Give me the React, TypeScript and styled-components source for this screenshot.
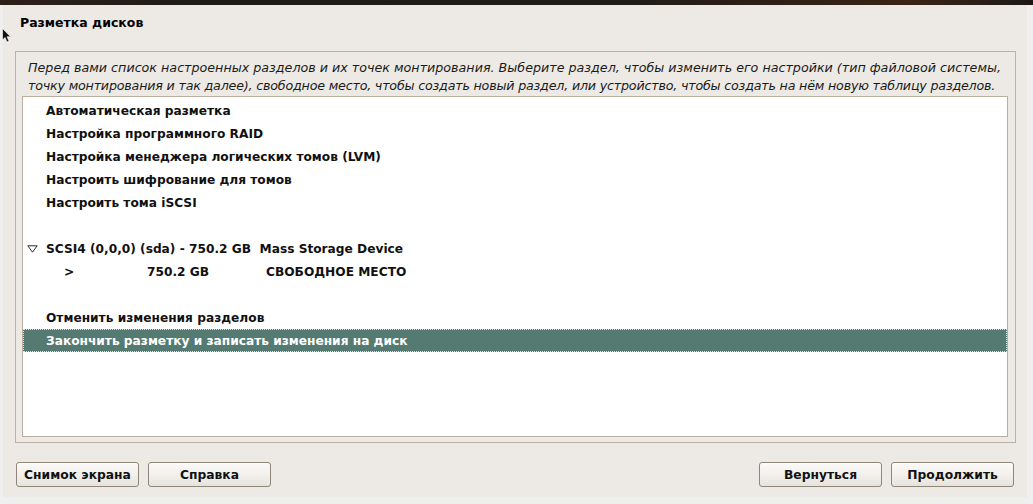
import styled, { createGlobalStyle } from "styled-components";

const GlobalStyle = createGlobalStyle`
  html, body {
    margin: 0;
    padding: 0;
    background: #efefef;
  }
  body {
    font-family: "DejaVu Sans", "Liberation Sans", sans-serif;
    font-size: 12px;
    color: #000;
  }
`;

const items = [
  { label: "Автоматическая разметка" },
  { label: "Настройка программного RAID" },
  { label: "Настройка менеджера логических томов (LVM)" },
  { label: "Настроить шифрование для томов" },
  { label: "Настроить тома iSCSI" },
];

const App = () => {
  return (
    <>
      <GlobalStyle />
      <Screen>
        <DesktopStrip />
        <Middle>
          <Gutter />
          <Window>
            <Title>Разметка дисков</Title>
            <Frame>
              <Description>
                <DescLine>
                  Перед вами список настроенных разделов и их точек монтирования. Выберите раздел, чтобы изменить его настройки (тип файловой системы,
                </DescLine>
                <DescLine $tight>
                  точку монтирования и так далее), свободное место, чтобы создать новый раздел, или устройство, чтобы создать на нём новую таблицу разделов.
                </DescLine>
              </Description>
              <ListBox>
                {items.map((item, idx) => (
                  <Row key={idx}>
                    <Cell $w={23} />
                    <span>{item.label}</span>
                  </Row>
                ))}
                <Row />
                <Row>
                  <Expander>
                    <svg width="11" height="8" viewBox="0 0 11 8">
                      <path d="M0.8 0.8 L10.2 0.8 L5.5 7.2 Z" fill="none" stroke="#2b2b2b" strokeWidth="1" />
                    </svg>
                  </Expander>
                  <span>SCSI4 (0,0,0) (sda) - 750.2 GB&nbsp; Mass Storage Device</span>
                </Row>
                <Row>
                  <Cell $w={41} />
                  <Cell $w={83}>&gt;</Cell>
                  <Cell $w={119}>750.2 GB</Cell>
                  <span>СВОБОДНОЕ МЕСТО</span>
                </Row>
                <Row />
                <Row>
                  <Cell $w={23} />
                  <span>Отменить изменения разделов</span>
                </Row>
                <Row $selected>
                  <Cell $w={23} />
                  <span>Закончить разметку и записать изменения на диск</span>
                </Row>
              </ListBox>
            </Frame>
            <ButtonBar>
              <ButtonGroup>
                <Button>Снимок экрана</Button>
                <Button>Справка</Button>
              </ButtonGroup>
              <ButtonGroup>
                <Button>Вернуться</Button>
                <Button>Продолжить</Button>
              </ButtonGroup>
            </ButtonBar>
          </Window>
          <RightGutter />
        </Middle>
        <Cursor width="10" height="16" viewBox="0 0 10 16">
          <path d="M0.5 0.5 L0.5 12 L3 9.5 L5 14 L7 13 L5 8.8 L8.5 8.8 Z" fill="#111" stroke="#fff" strokeWidth="0.6" />
        </Cursor>
      </Screen>
    </>
  );
};

export default App;

const Screen = styled.div`
  position: relative;
  width: 1033px;
  height: 504px;
  display: flex;
  flex-direction: column;
  overflow: hidden;
  background: #efefef;
`;

const Cursor = styled.svg`
  position: absolute;
  left: 2px;
  top: 28px;
`;

const DesktopStrip = styled.div`
  height: 5px;
  flex-shrink: 0;
  background: linear-gradient(
    90deg,
    #2c2119 0%,
    #1f1a17 20%,
    #201b18 60%,
    #3a2414 88%,
    #2a1f18 95%,
    #1c1816 100%
  );
`;

const Middle = styled.div`
  display: flex;
  height: 492px;
`;

const Gutter = styled.div`
  width: 3px;
  background: #efefef;
`;

const RightGutter = styled.div`
  width: 6px;
  background: #efefef;
`;

const Window = styled.div`
  width: 1024px;
  background: #edeae5;
  display: flex;
  flex-direction: column;
  padding: 0 0 0 12px;
  box-sizing: border-box;
`;

const Title = styled.div`
  font-weight: bold;
  font-size: 12.5px;
  height: 46px;
  line-height: 36px;
  padding-left: 5px;
`;

const Frame = styled.div`
  width: 1001px;
  height: 392px;
  box-sizing: border-box;
  border: 1px solid #bcb3a6;
  padding: 7px 7px 5px 6px;
  display: flex;
  flex-direction: column;
`;

const Description = styled.div`
  font-style: italic;
  font-size: 12.7px;
  line-height: 18px;
  color: #1a1a1a;
  padding-left: 6px;
  height: 37px;
  white-space: nowrap;
`;

const DescLine = styled.div<{ $tight?: boolean }>`
  letter-spacing: ${(p) => (p.$tight ? "-0.2px" : "0")};
`;

const ListBox = styled.div`
  flex: 1;
  background: #fff;
  border: 1px solid #b9ae9f;
  box-shadow: inset 0 0 0 1px #fff;
  padding-top: 2px;
  display: flex;
  flex-direction: column;
`;

const Row = styled.div<{ $selected?: boolean }>`
  height: 23px;
  display: flex;
  align-items: center;
  font-weight: bold;
  font-size: 12.2px;
  white-space: nowrap;
  box-sizing: border-box;
  color: ${(p) => (p.$selected ? "#fff" : "#111")};
  background: ${(p) => (p.$selected ? "#557a71" : "transparent")};
  outline: ${(p) => (p.$selected ? "1px dotted #d8e2df" : "none")};
  outline-offset: -1px;
`;

const Cell = styled.span<{ $w: number }>`
  display: inline-block;
  width: ${(p) => p.$w}px;
  flex-shrink: 0;
`;

const Expander = styled.span`
  width: 23px;
  padding-left: 4px;
  box-sizing: border-box;
  display: flex;
  align-items: center;
  flex-shrink: 0;
`;

const ButtonBar = styled.div`
  display: flex;
  justify-content: space-between;
  width: 998px;
  padding: 19px 0 0 1px;
`;

const ButtonGroup = styled.div`
  display: flex;
  gap: 9px;
`;

const Button = styled.button`
  width: 123px;
  height: 25px;
  font-family: "DejaVu Sans", "Liberation Sans", sans-serif;
  font-weight: bold;
  font-size: 12.3px;
  color: #111;
  border: 1px solid #8f8677;
  border-radius: 3px;
  background: linear-gradient(180deg, #fbfaf8 0%, #f1eeea 60%, #e6e2dc 100%);
  box-shadow: inset 0 1px 0 #fff;
  padding: 0;
`;
